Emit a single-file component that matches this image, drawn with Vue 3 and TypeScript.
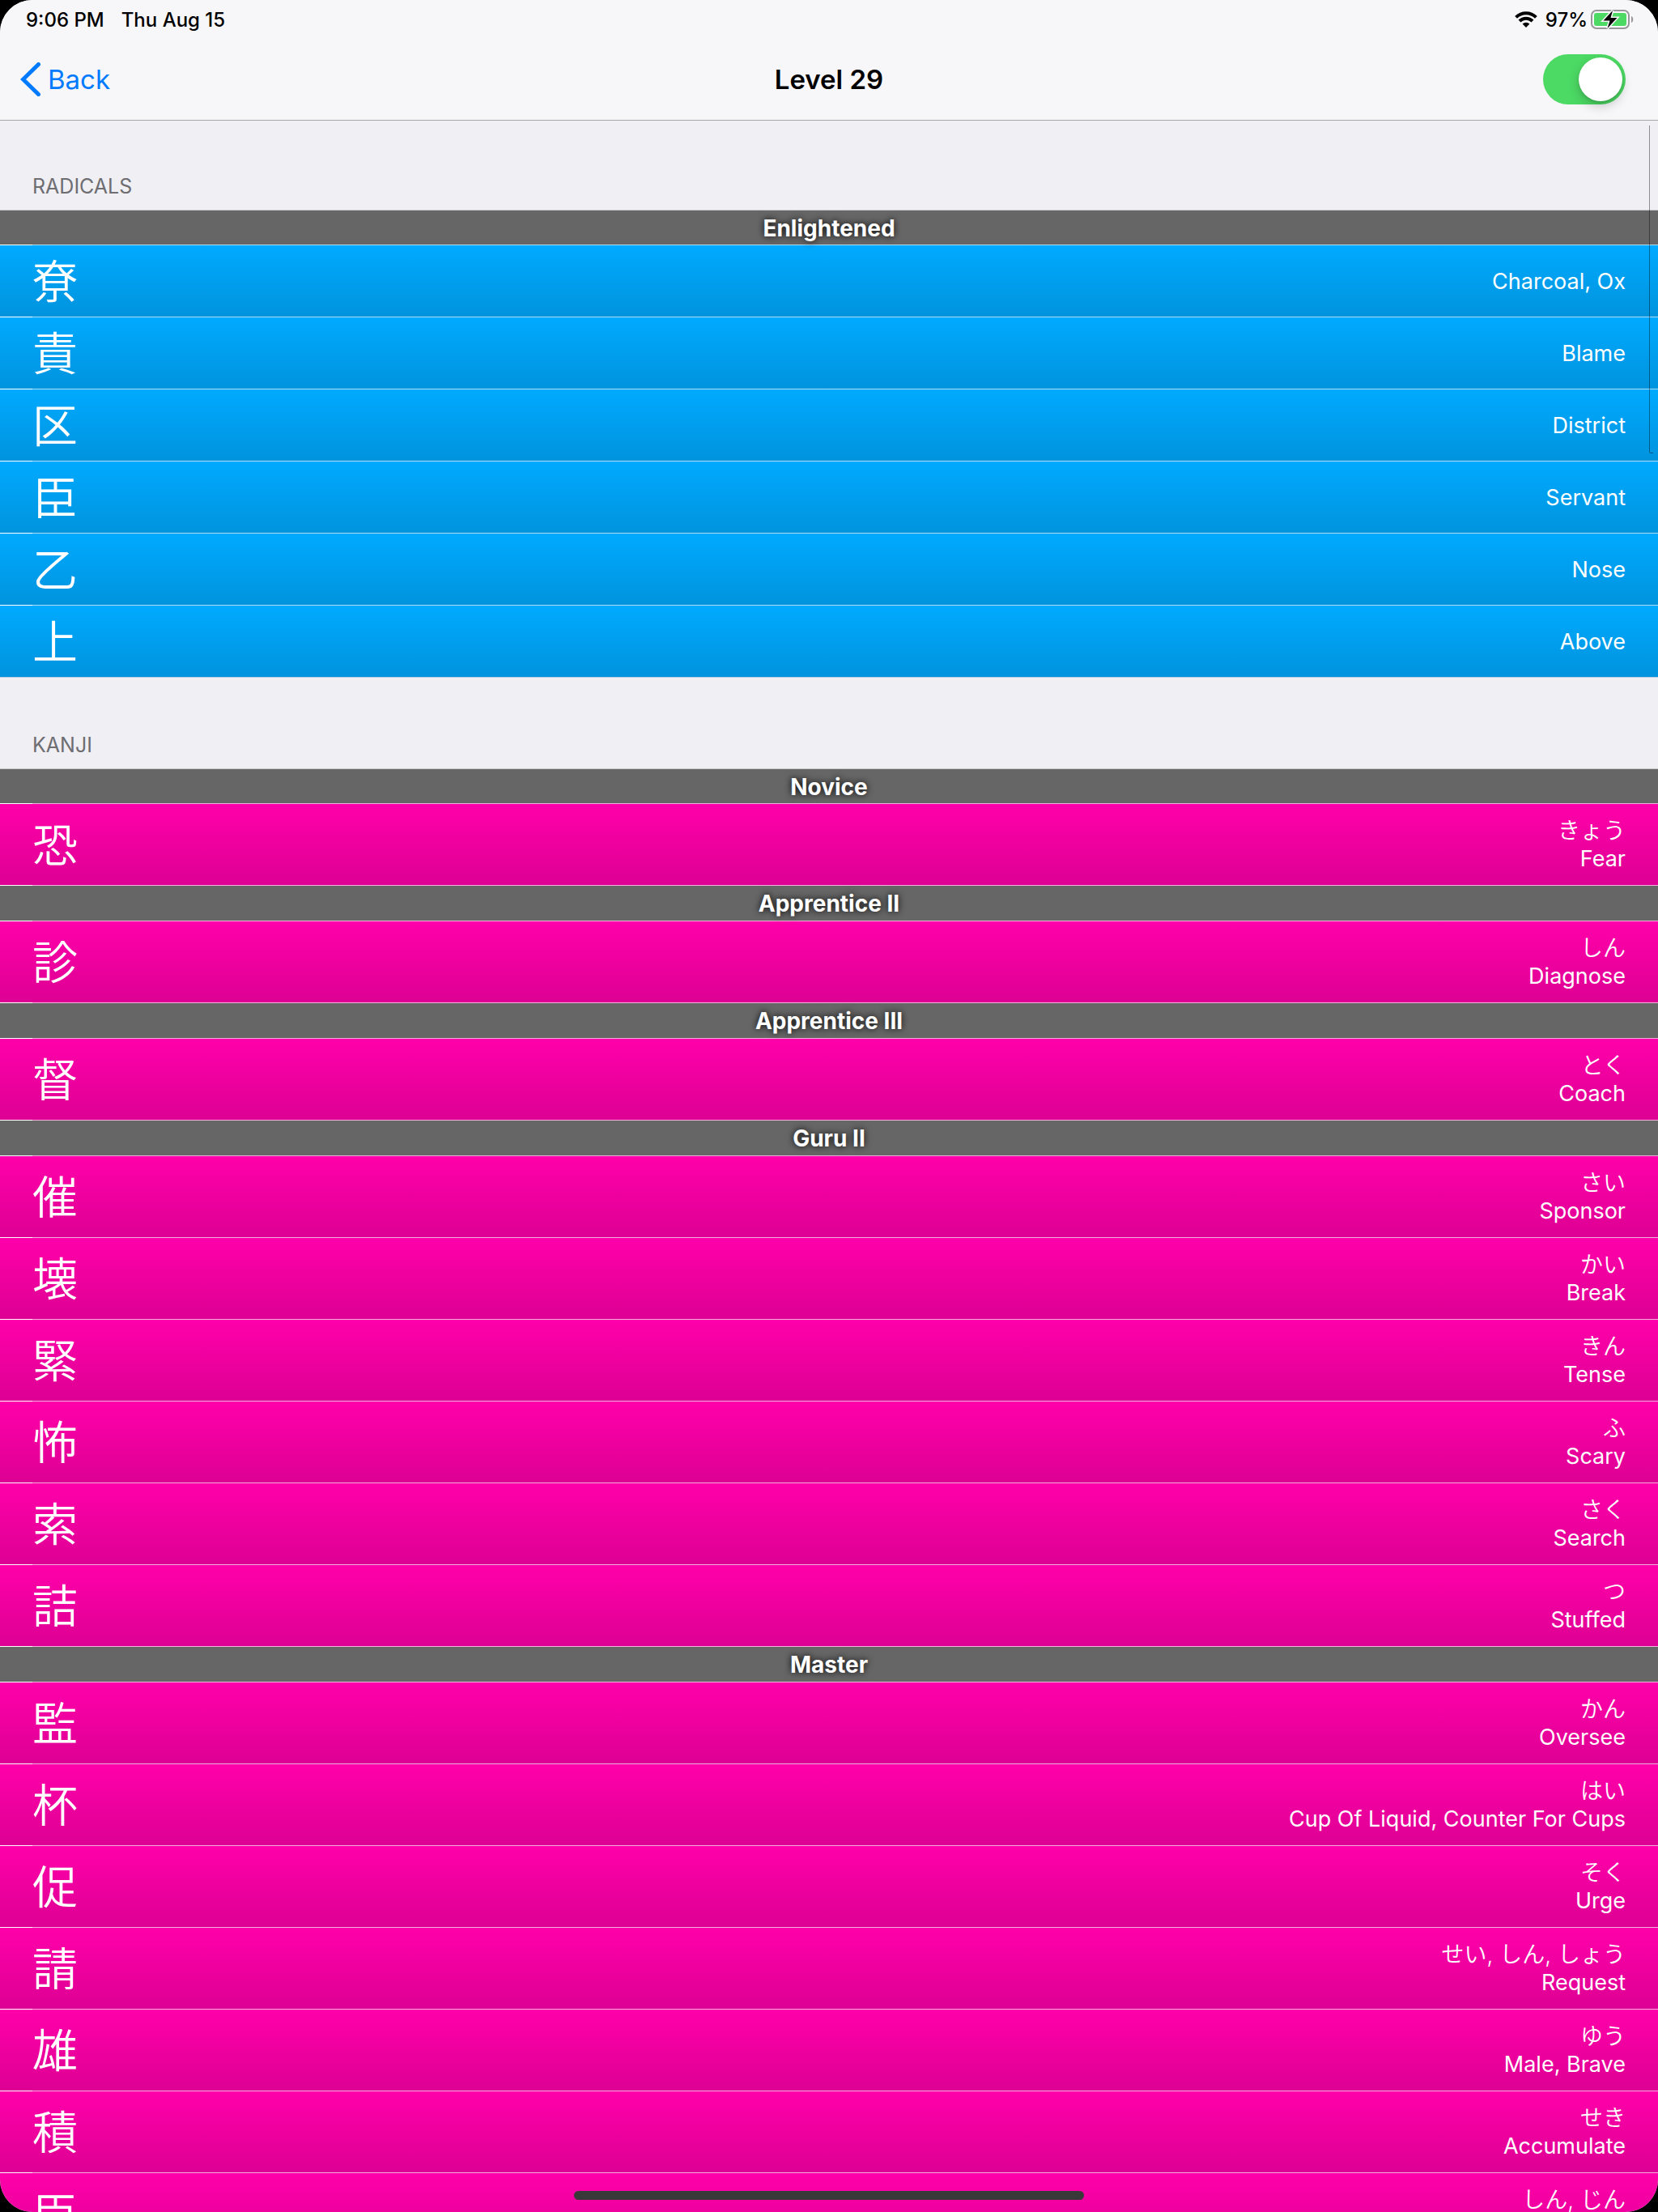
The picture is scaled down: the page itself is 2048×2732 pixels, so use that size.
<script setup lang="ts">
import { ref } from 'vue'

interface Subject {
  characters: string
  readings?: string
  meanings: string
}

interface Stage {
  name: string
  subjects: Subject[]
}

interface Section {
  title: string
  kind: 'radical' | 'kanji'
  stages: Stage[]
}

const showAnswers = ref(true)

const sections: Section[] = [
  {
    title: 'Radicals',
    kind: 'radical',
    stages: [
      {
        name: 'Enlightened',
        subjects: [
          { characters: '尞', meanings: 'Charcoal, Ox' },
          { characters: '責', meanings: 'Blame' },
          { characters: '区', meanings: 'District' },
          { characters: '臣', meanings: 'Servant' },
          { characters: '乙', meanings: 'Nose' },
          { characters: '上', meanings: 'Above' },
        ],
      },
    ],
  },
  {
    title: 'Kanji',
    kind: 'kanji',
    stages: [
      { name: 'Novice', subjects: [{ characters: '恐', readings: 'きょう', meanings: 'Fear' }] },
      { name: 'Apprentice II', subjects: [{ characters: '診', readings: 'しん', meanings: 'Diagnose' }] },
      { name: 'Apprentice III', subjects: [{ characters: '督', readings: 'とく', meanings: 'Coach' }] },
      {
        name: 'Guru II',
        subjects: [
          { characters: '催', readings: 'さい', meanings: 'Sponsor' },
          { characters: '壊', readings: 'かい', meanings: 'Break' },
          { characters: '緊', readings: 'きん', meanings: 'Tense' },
          { characters: '怖', readings: 'ふ', meanings: 'Scary' },
          { characters: '索', readings: 'さく', meanings: 'Search' },
          { characters: '詰', readings: 'つ', meanings: 'Stuffed' },
        ],
      },
      {
        name: 'Master',
        subjects: [
          { characters: '監', readings: 'かん', meanings: 'Oversee' },
          { characters: '杯', readings: 'はい', meanings: 'Cup Of Liquid, Counter For Cups' },
          { characters: '促', readings: 'そく', meanings: 'Urge' },
          { characters: '請', readings: 'せい, しん, しょう', meanings: 'Request' },
          { characters: '雄', readings: 'ゆう', meanings: 'Male, Brave' },
          { characters: '積', readings: 'せき', meanings: 'Accumulate' },
          { characters: '臣', readings: 'しん, じん', meanings: 'Servant' },
        ],
      },
    ],
  },
]
</script>

<template>
  <div class="screen">
    <header class="top">
      <div class="status">
        <div class="status-side">
          <span>9:06 PM</span>
          <span>Thu Aug 15</span>
        </div>
        <div class="status-icons">
          <svg class="wifi" width="28" height="20" viewBox="0 0 28 20" aria-hidden="true">
            <g fill="none" stroke="#000" stroke-width="4">
              <path d="M1.6 7.4a17.6 17.6 0 0 1 24.8 0" />
              <path d="M6 12a11.4 11.4 0 0 1 16 0" />
            </g>
            <path d="M9.6 15.6a6.4 6.4 0 0 1 8.8 0L14 20z" />
          </svg>
          <span>97%</span>
          <svg class="battery" width="54" height="28" viewBox="0 0 54 28" aria-hidden="true">
            <rect x="1" y="3" width="46" height="22" rx="6" fill="none" stroke="#98989c" stroke-width="2" />
            <path d="M50 10v8c3-1 3-7 0-8z" fill="#98989c" />
            <rect x="4" y="6" width="40" height="16" rx="3" fill="#4cd964" />
            <path
              d="M27 3 15.500 15.500h8L20.500 25 32.500 12h-8z"
              fill="#000"
              stroke="#f7f7f9"
              stroke-width="3"
              paint-order="stroke"
            />
          </svg>
        </div>
      </div>
      <nav class="nav">
        <button class="back" type="button">
          <svg width="26" height="42" viewBox="0 0 26 42" aria-hidden="true">
            <path
              d="M22.500 2.500 3.500 21l19 18.500"
              fill="none"
              stroke="#007aff"
              stroke-width="5"
              stroke-linecap="round"
            />
          </svg>
          <span>Back</span>
        </button>
        <h1>Level 29</h1>
        <input v-model="showAnswers" class="switch" type="checkbox" role="switch" aria-label="Show answers" />
      </nav>
    </header>

    <main class="list">
      <section v-for="section in sections" :key="section.title" :class="section.kind">
        <h2>{{ section.title }}</h2>
        <template v-for="stage in section.stages" :key="stage.name">
          <h3>{{ stage.name }}</h3>
          <ul>
            <li v-for="subject in stage.subjects" :key="subject.characters">
              <span class="characters" lang="ja">{{ subject.characters }}</span>
              <div v-if="showAnswers" class="answers">
                <span v-if="subject.readings" class="readings" lang="ja">{{ subject.readings }}</span>
                <span>{{ subject.meanings }}</span>
              </div>
            </li>
          </ul>
        </template>
      </section>
    </main>

    <div class="scroll-indicator"></div>
    <div class="home-indicator"></div>
  </div>
</template>

<style>
body {
  background: #000;
}
</style>

<style scoped>
.screen {
  position: relative;
  display: flex;
  flex-direction: column;
  height: 100vh;
  overflow: hidden;
  border-radius: 40px;
  background: #efeff4;
  font-family: Inter, "Noto Sans CJK JP", sans-serif;
}

.top {
  background: #f7f7f9;
  border-bottom: 1px solid #a7a7ab;
}

.status {
  display: flex;
  justify-content: space-between;
  align-items: center;
  height: 48px;
  padding: 0 29px 0 32px;
  font-size: 24px;
  font-weight: 500;
}

.status-side {
  display: flex;
  gap: 21px;
}

.status-icons {
  display: flex;
  align-items: center;
}

.wifi {
  margin-right: 10px;
}

.battery {
  margin-left: 4px;
}

.nav {
  display: grid;
  grid-template-columns: 1fr auto 1fr;
  align-items: center;
  height: 100px;
}

.back {
  display: flex;
  align-items: center;
  gap: 8px;
  justify-self: start;
  margin-left: 25px;
  padding: 0;
  border: 0;
  background: none;
  color: #007aff;
  font-family: inherit;
  font-size: 33px;
}

h1 {
  margin: 0;
  font-size: 33px;
  font-weight: 600;
  color: #000;
}

.switch {
  appearance: none;
  justify-self: end;
  display: flex;
  width: 102px;
  height: 62px;
  margin: 0 40px 0 0;
  padding: 4px;
  box-sizing: border-box;
  border-radius: 31px;
  background: #e5e5ea;
}

.switch:checked {
  justify-content: flex-end;
  background: #4cd964;
}

.switch::before {
  content: "";
  width: 54px;
  height: 54px;
  border-radius: 50%;
  background: #fff;
  box-shadow: 0 6px 14px rgba(0, 0, 0, 0.2), 0 2px 3px rgba(0, 0, 0, 0.1);
}

.list {
  flex: 1;
  overflow-y: auto;
  scrollbar-width: none;
}

h2 {
  display: flex;
  align-items: flex-end;
  height: 113px;
  margin: 0;
  padding: 0 40px 13px;
  box-sizing: border-box;
  border-bottom: 1px solid #c8c7cc;
  font-size: 25px;
  line-height: 32px;
  font-weight: 400;
  color: #6d6d72;
  text-transform: uppercase;
}

.radical h2 {
  height: 111px;
}

h3 {
  height: 44px;
  margin: 0;
  background: linear-gradient(90deg, #fff 40px, var(--line) 40px) bottom / 100% 1px no-repeat #666;
  font-size: 28px;
  line-height: 44px;
  font-weight: 700;
  color: #fff;
  text-align: center;
  text-shadow: 0 0 8px #000;
}

h2 + h3 {
  height: 43px;
}

ul {
  margin: 0;
  padding: 0;
  list-style: none;
}

li {
  display: flex;
  justify-content: space-between;
  align-items: center;
  height: 101px;
  padding: 0 40px;
  box-sizing: border-box;
  background:
    linear-gradient(90deg, #fff 40px, var(--line) 40px) bottom / 100% 1px no-repeat,
    linear-gradient(var(--from), var(--to));
  color: #fff;
}

.radical {
  --from: #00aaff;
  --to: #0093dd;
  --line: #b0dcf5;
}

.kanji {
  --from: #ff00aa;
  --to: #dd0093;
  --line: #f3b0de;
}

.radical li {
  height: 89px;
}

.radical li:last-child {
  background:
    linear-gradient(#b4cbe0, #b4cbe0) bottom / 100% 1px no-repeat,
    linear-gradient(var(--from), var(--to));
}

.characters {
  padding-bottom: 8px;
  font-family: "Noto Sans CJK JP", sans-serif;
  font-size: 56px;
  line-height: 80px;
  font-weight: 350;
}

.answers {
  display: flex;
  flex-direction: column;
  gap: 1px;
  font-size: 27px;
  line-height: 34px;
  text-align: right;
}

.readings {
  font-size: 28px;
  font-weight: 350;
}

.scroll-indicator {
  position: absolute;
  top: 155px;
  right: 6px;
  width: 4px;
  height: 404px;
  border-left: 1px solid rgba(0, 0, 0, 0.4);
  border-bottom: 1px solid rgba(0, 0, 0, 0.4);
  border-bottom-left-radius: 2px;
}

.home-indicator {
  position: absolute;
  bottom: 15px;
  left: 50%;
  width: 630px;
  height: 11px;
  margin-left: -315px;
  border-radius: 6px;
  background: #393939;
}
</style>
